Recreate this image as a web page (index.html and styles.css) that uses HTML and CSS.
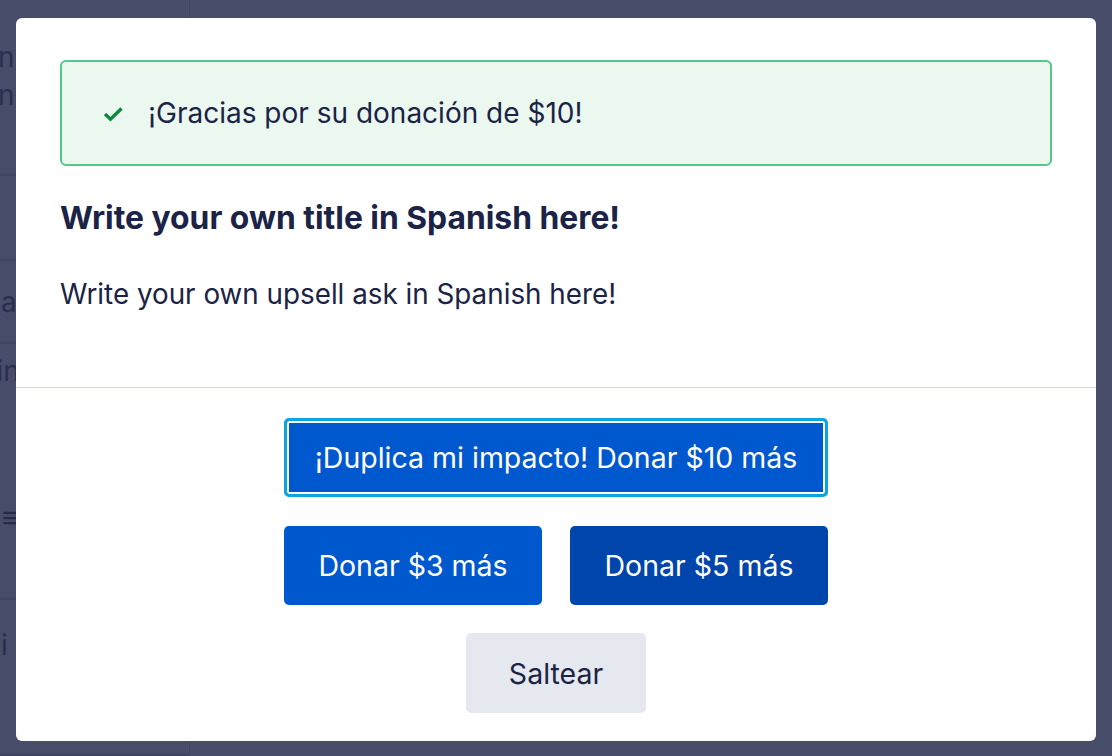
FILE: index.html
```html
<!DOCTYPE html>
<html lang="es">
<head>
<meta charset="utf-8">
<title>Upsell</title>
<link rel="stylesheet" href="styles.css">
</head>
<body>
<div class="page">
  <aside class="sidebar">
    <div class="srow r1"><span class="frag">Don i</span><span class="frag">Don</span></div>
    <div class="srow r2"></div>
    <div class="srow r3"><span class="frag">Pa</span></div>
    <div class="srow r4"><span class="frag">Fin</span><span class="frag menu">&#8801;</span></div>
    <div class="srow r6"><span class="frag">Lk i</span></div>
  </aside>
  <main class="content"></main>
</div>
<div class="overlay">
  <div class="modal">
    <div class="modal-body">
      <div class="alert">
        <svg class="check" width="20" height="16" viewBox="0 0 20 16" aria-hidden="true">
          <polyline points="2,8 7.5,13.2 18.5,2.5" fill="none" stroke="#0b8a3a" stroke-width="3.4" stroke-linecap="butt" stroke-linejoin="miter"/>
        </svg>
        <span class="alert-text">¡Gracias por su donación de $10!</span>
      </div>
      <h2 class="title">Write your own title in Spanish here!</h2>
      <p class="ask">Write your own upsell ask in Spanish here!</p>
    </div>
    <div class="modal-footer">
      <button class="btn btn-primary btn-focus">¡Duplica mi impacto! Donar $10 más</button>
      <div class="btn-row">
        <button class="btn btn-primary">Donar $3 más</button>
        <button class="btn btn-dark">Donar $5 más</button>
      </div>
      <button class="btn btn-light">Saltear</button>
    </div>
  </div>
</div>
</body>
</html>
```
FILE: styles.css
```css
* { box-sizing: border-box; }
html, body { margin: 0; padding: 0; }
body {
  width: 1112px;
  height: 756px;
  overflow: hidden;
  background: #484d6a;
  font-family: Inter, "Noto Sans", "Liberation Sans", sans-serif;
  position: relative;
}
.page {
  display: flex;
  height: 756px;
}
.sidebar {
  width: 190px;
  border-right: 1px solid #434862;
  background: #474c69;
  display: flex;
  flex-direction: column;
}
.srow {
  border-bottom: 2px solid #3f4460;
  display: flex;
  flex-direction: column;
  overflow: hidden;
  white-space: nowrap;
}
.frag {
  color: #2a2f4e;
  font-size: 28px;
  line-height: 38px;
  margin-left: -39px;
}
.r1 { height: 176px; padding-top: 38px; }
.r2 { height: 85px; }
.r3 { height: 83px; padding-top: 22px; }
.r3 .frag { margin-left: -17px; }
.r4 { height: 256px; padding-top: 8px; }
.r4 .frag { margin-left: -20px; }
.r4 .menu { margin-left: 2px; margin-top: 108px; font-size: 30px; color: #262a48; }
.r6 { flex: 1; padding-top: 26px; }
.r6 .frag { margin-left: -38px; }
.content { flex: 1; }

.overlay {
  position: absolute;
  inset: 0;
  padding: 18px 16px 15px 16px;
}
.modal {
  background: #fff;
  border-radius: 6px;
  height: 723px;
  display: flex;
  flex-direction: column;
  color: #1b2346;
}
.modal-body {
  padding: 42px 44px 0 44px;
  height: 370px;
  border-bottom: 1px solid #d3d9e4;
}
.alert {
  height: 106px;
  border: 2px solid #52c98a;
  background: #ebf8f0;
  border-radius: 6px;
  display: flex;
  align-items: center;
  padding-left: 41px;
}
.check { margin-top: 1px; }
.alert-text {
  margin-left: 25px;
  font-size: 28px;
}
.title {
  margin: 33px 0 0 0;
  font-size: 31.8px;
  line-height: 38px;
  font-weight: 700;
}
.ask {
  margin: 39px 0 0 0;
  font-size: 27.8px;
  line-height: 36px;
}
.modal-footer {
  display: flex;
  flex-direction: column;
  align-items: center;
  padding-top: 30px;
}
.btn {
  font-family: inherit;
  font-size: 28.5px;
  border: none;
  border-radius: 5px;
  height: 79px;
  cursor: pointer;
  white-space: nowrap;
}
.btn-primary { background: #0058cf; color: #fff; }
.btn-dark { background: #0045ab; color: #fff; }
.btn-focus {
  width: 544px;
  border: 3px solid #0aa5dc;
  box-shadow: inset 0 0 0 2px #fff;
}
.btn-row {
  display: flex;
  gap: 28px;
  margin-top: 29px;
}
.btn-row .btn { width: 258px; }
.btn-light {
  background: #e5e8ee;
  color: #1b2346;
  width: 180px;
  height: 80px;
  margin-top: 28px;
}
```
